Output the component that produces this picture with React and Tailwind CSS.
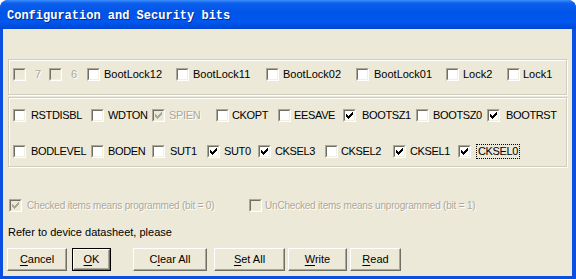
import React from 'react'

function Box({ checked, disabled }) {
  // classic 13x13 sunken checkbox
  const cols = [[1, 3], [2, 4], [3, 5], [4, 4], [5, 3], [6, 2], [7, 1]]
  return (
    <span className="relative block w-[13px] h-[13px] shrink-0 border border-t-[#aca899] border-l-[#aca899] border-r-white border-b-white">
      <span className={`block w-full h-full border border-t-[#716f64] border-l-[#716f64] border-r-[#f1efe2] border-b-[#f1efe2] ${disabled ? 'bg-[#ece9d8]' : 'bg-white'}`} />
      {checked && (
        <svg className="absolute left-[1px] top-[1px]" width="9" height="9" viewBox="0 0 9 9">
          <path d={cols.map(([x, y]) => `M${x} ${y}h1v3h-1z`).join('')} fill={disabled ? '#aca899' : '#000'} />
        </svg>
      )}
    </span>
  )
}

function Item({ w, label, checked, disabled, focus, gap = 'ml-[5px]', small, narrow }) {
  return (
    <div className={`flex items-center shrink-0 ${w}`}>
      <Box checked={checked} disabled={disabled} />
      <span
        className={`${gap} leading-[13px] whitespace-nowrap ${small ? 'text-[10px] tracking-[-0.2px]' : ''} ${narrow ? 'tracking-[-0.35px]' : ''} ${disabled ? 'text-[#aca899] [text-shadow:1px_1px_0_#fff]' : 'text-black'} ${focus ? 'border border-dotted border-black px-[1px] -ml-[1px]' : ''}`}
      >
        {label}
      </span>
    </div>
  )
}

function Btn({ w, children, isDefault }) {
  const inner = (
    <div className="h-full w-full flex items-center justify-center bg-[#ece9d8] border border-t-white border-l-white border-r-[#716f64] border-b-[#716f64] shadow-[inset_-1px_-1px_0_#aca899] text-black">
      {children}
    </div>
  )
  return isDefault ? (
    <div className={`h-[23px] ${w} border border-black`}>{inner}</div>
  ) : (
    <div className={`h-[23px] ${w}`}>{inner}</div>
  )
}

const U = ({ children }) => <span className="underline underline-offset-[2px]">{children}</span>

export default function App() {
  return (
    <div className="w-[576px] h-[279px] bg-white font-['Liberation_Sans',Arial,sans-serif] text-[11px]">
      <div className="w-full h-full flex flex-col rounded-t-[8px] overflow-hidden bg-[#0a4fe2]">
        {/* Title bar */}
        <div className="h-[29px] shrink-0 flex items-center pl-[7px] bg-[linear-gradient(to_bottom,#3d8ffc_0px,#0d60ec_3px,#0054e8_12px,#0058ee_22px,#0046d4_29px)]">
          <span className="font-['Liberation_Mono',monospace] font-bold text-[12px] text-white [text-shadow:1px_1px_0_#0a2a90] mt-[2px]">
            Configuration and Security bits
          </span>
        </div>

        {/* Client area */}
        <div className="flex-1 ml-[3px] mr-[4px] mb-[3px] bg-[#ece9d8] flex flex-col">
          {/* Lock bits */}
          <div className="mt-[30px] mx-[5px] h-[36px] border border-[#d0cdbf] shadow-[inset_1px_1px_0_#fff,1px_1px_0_#fff] pl-[4px] pt-[8px]">
            <div className="flex">
              <Item w="w-[36px]" label="7" disabled gap="ml-[9px]" />
              <Item w="w-[38px]" label="6" disabled gap="ml-[9px]" />
              <Item w="w-[89px]" label="BootLock12" gap="ml-[4px]" />
              <Item w="w-[90px]" label="BootLock11" gap="ml-[4px]" />
              <Item w="w-[90px]" label="BootLock02" gap="ml-[4px]" />
              <Item w="w-[90px]" label="BootLock01" gap="ml-[5px]" />
              <Item w="w-[61px]" label="Lock2" gap="ml-[4px]" />
              <Item w="w-[50px]" label="Lock1" gap="ml-[3px]" />
            </div>
          </div>

          {/* Fuse bits */}
          <div className="mt-[2px] mx-[5px] h-[70px] border border-[#d0cdbf] shadow-[inset_1px_1px_0_#fff,1px_1px_0_#fff] pl-[4px] pt-[11px] flex flex-col gap-[22px]">
            <div className="flex">
              <Item w="w-[78px]" label="RSTDISBL" narrow />
              <Item w="w-[61px]" label="WDTON" gap="ml-[4px]" narrow />
              <Item w="w-[64px]" label="SPIEN" checked disabled gap="ml-[4px]" narrow />
              <Item w="w-[62px]" label="CKOPT" gap="ml-[3px]" narrow />
              <Item w="w-[65px]" label="EESAVE" gap="ml-[3px]" narrow />
              <Item w="w-[73px]" label="BOOTSZ1" checked gap="ml-[6px]" narrow />
              <Item w="w-[71px]" label="BOOTSZ0" gap="ml-[4px]" narrow />
              <Item w="w-[70px]" label="BOOTRST" checked gap="ml-[6px]" narrow />
            </div>
            <div className="flex">
              <Item w="w-[78px]" label="BODLEVEL" narrow />
              <Item w="w-[61px]" label="BODEN" gap="ml-[4px]" narrow />
              <Item w="w-[55px]" label="SUT1" narrow />
              <Item w="w-[51px]" label="SUT0" checked gap="ml-[4px]" narrow />
              <Item w="w-[67px]" label="CKSEL3" checked gap="ml-[4px]" narrow />
              <Item w="w-[68px]" label="CKSEL2" gap="ml-[3px]" narrow />
              <Item w="w-[65px]" label="CKSEL1" checked gap="ml-[4px]" narrow />
              <Item w="w-[70px]" label="CKSEL0" checked focus narrow />
            </div>
          </div>

          {/* Legend */}
          <div className="mt-[32px] ml-[6px] flex">
            <Item w="w-[240px]" label="Checked items means programmed (bit = 0)" checked disabled small />
            <Item w="w-[240px]" label="UnChecked items means unprogrammed (bit = 1)" disabled gap="ml-[3px]" small />
          </div>

          <div className="mt-[14px] ml-[5px] h-[13px] leading-[13px] text-black">Refer to device datasheet, please</div>

          {/* Buttons */}
          <div className="mt-[9px] ml-[4px] flex">
            <Btn w="w-[60px]"><span><U>C</U>ancel</span></Btn>
            <div className="ml-[5px]">
              <Btn w="w-[39px]" isDefault><span><U>O</U>K</span></Btn>
            </div>
            <div className="ml-[22px]">
              <Btn w="w-[74px]"><span>C<U>l</U>ear All</span></Btn>
            </div>
            <div className="ml-[7px]">
              <Btn w="w-[71px]"><span><U>S</U>et All</span></Btn>
            </div>
            <div className="ml-[3px]">
              <Btn w="w-[59px]"><span><U>W</U>rite</span></Btn>
            </div>
            <div className="ml-[3px]">
              <Btn w="w-[51px]"><span><U>R</U>ead</span></Btn>
            </div>
          </div>
        </div>
      </div>
    </div>
  )
}
